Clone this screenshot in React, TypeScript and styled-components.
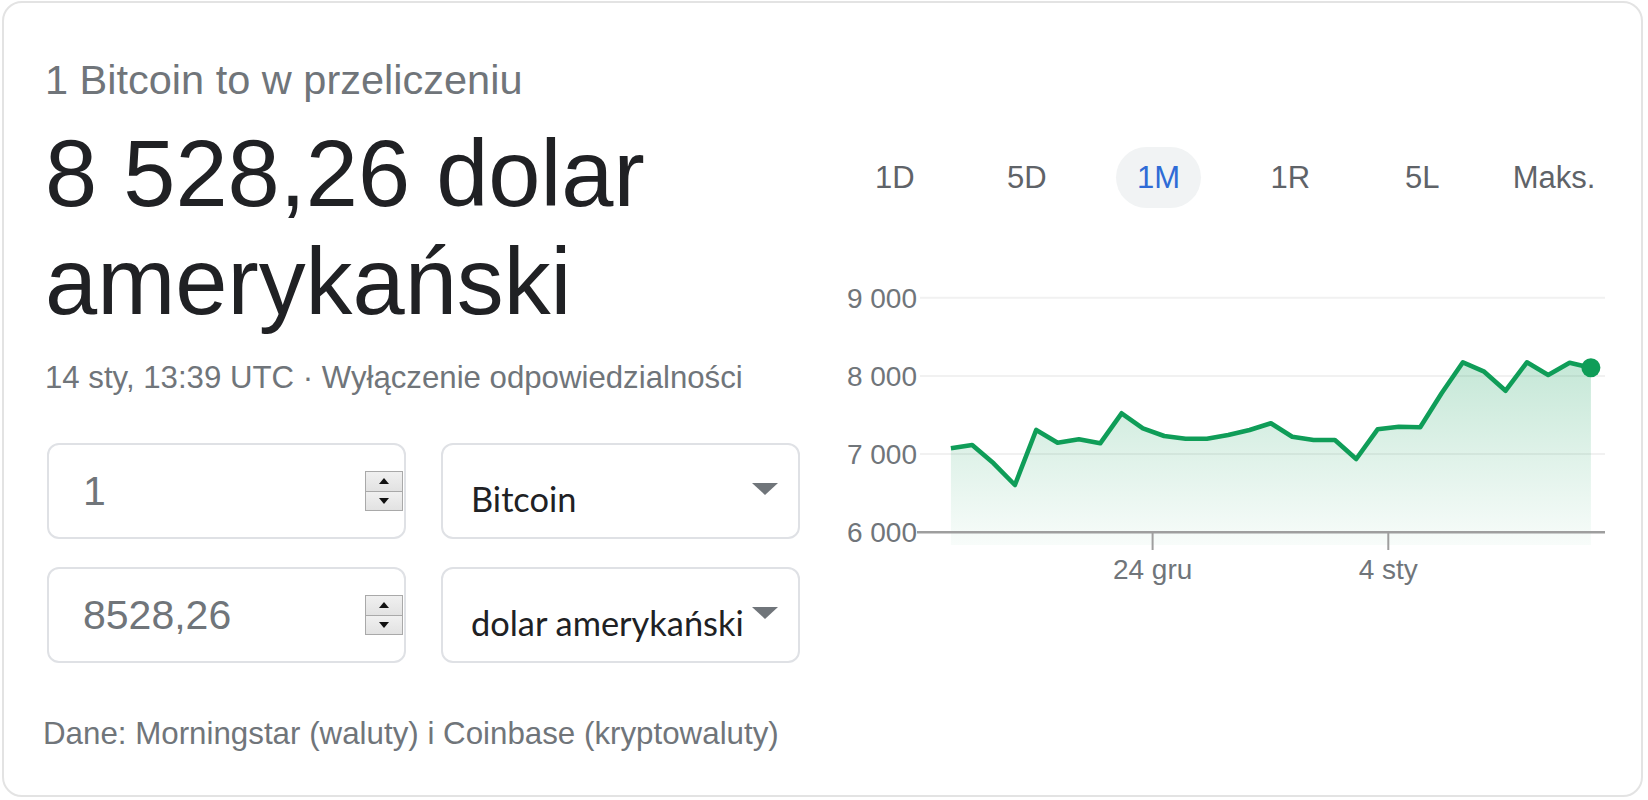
import React from 'react';
import styled, { createGlobalStyle } from 'styled-components';

const GlobalStyle = createGlobalStyle`
  html, body { margin: 0; padding: 0; background: #fff; }
  body { font-family: "Liberation Sans", Arial, sans-serif; }
`;

const Card = styled.div`
  box-sizing: border-box;
  width: 1641px;
  height: 796px;
  margin: 1px 0 0 2px;
  border: 2px solid #e3e3e3;
  border-radius: 20px;
  padding: 51px 0 0 41px;
  display: flex;
  align-items: flex-start;
  gap: 26px;
`;

const LeftColumn = styled.div`
  width: 758px;
  display: flex;
  flex-direction: column;
`;

const Title = styled.div`
  font-size: 41.5px;
  line-height: 52px;
  color: #70757a;
`;

const BigValue = styled.div`
  margin-top: 14px;
  font-size: 93.8px;
  line-height: 108px;
  color: #202124;
`;

const Meta = styled.div`
  margin-top: 22px;
  font-size: 31.2px;
  line-height: 40px;
  color: #70757a;
  white-space: nowrap;
`;

const Form = styled.div`
  margin: 45px 0 0 2px;
  display: grid;
  grid-template-columns: 359px 359px;
  grid-auto-rows: 96px;
  column-gap: 35px;
  row-gap: 28px;
`;

const Field = styled.div`
  box-sizing: border-box;
  border: 2px solid #dfe1e5;
  border-radius: 12px;
  display: flex;
  align-items: center;
  padding: 0 1px 0 34px;
`;

const NumberInput = styled.input`
  flex: 1;
  min-width: 0;
  border: none;
  outline: none;
  background: transparent;
  padding: 0;
  font-family: "Liberation Sans", Arial, sans-serif;
  font-size: 41px;
  color: #70757a;
`;

const Spinner = styled.div`
  width: 38px;
  height: 40px;
  box-sizing: border-box;
  border: 1px solid #a9a9a9;
  display: flex;
  flex-direction: column;
`;

const SpinButton = styled.div`
  flex: 1;
  background: linear-gradient(#f0f0f0, #e2e2e2);
  display: flex;
  align-items: center;
  justify-content: center;
  & + & { border-top: 1px solid #a9a9a9; }
`;

const SpinArrow = styled.span<{ $up?: boolean }>`
  width: 0;
  height: 0;
  border-left: 5px solid transparent;
  border-right: 5px solid transparent;
  ${(p) => (p.$up ? 'border-bottom: 6px solid #111;' : 'border-top: 6px solid #111;')}
`;

const SelectBox = styled.div`
  box-sizing: border-box;
  border: 2px solid #dfe1e5;
  border-radius: 12px;
  display: flex;
  align-items: center;
  padding: 14px 20px 0 28px;
  font-family: Lato, "Liberation Sans", sans-serif;
  font-size: 34.4px;
  color: #202124;
`;

const SelectText = styled.span`
  flex: 1;
  white-space: nowrap;
`;

const Caret = styled.svg`
  flex: none;
  align-self: flex-start;
  margin-top: 24px;
`;

const Footer = styled.div`
  margin-top: 51px;
  margin-left: -2px;
  font-size: 31.3px;
  line-height: 40px;
  color: #70757a;
  white-space: nowrap;
`;

const ChartColumn = styled.div`
  width: 791px;
  margin-top: 93px;
  display: flex;
  flex-direction: column;
`;

const Tabs = styled.div`
  display: grid;
  grid-template-columns: repeat(6, 1fr);
  height: 61px;
`;

const Tab = styled.div`
  display: flex;
  justify-content: center;
  align-items: center;
`;

const TabPill = styled.span<{ $active?: boolean }>`
  height: 61px;
  line-height: 62px;
  padding: 0 21px;
  border-radius: 31px;
  font-size: 31px;
  background: ${(p) => (p.$active ? '#f1f3f4' : 'transparent')};
  color: ${(p) => (p.$active ? '#2f6bd6' : '#5f6368')};
`;

const ChartSvg = styled.svg`
  margin-top: 72px;
  display: block;
`;

const values = [
  7074, 7116, 6882, 6605, 7308, 7146, 7189, 7138, 7522, 7330, 7231, 7197, 7197, 7244, 7308, 7394,
  7223, 7180, 7180, 6937, 7317, 7350, 7343, 7778, 8174, 8054, 7811, 8174, 8012, 8169, 8105,
];

const X0 = 121.9;
const DX = 21.333;
const BASE = 252.3;
const PER = 0.0782;
const yOf = (v: number) => BASE - (v - 6000) * PER;

function Chart() {
  const pts = values.map((v, i) => [X0 + i * DX, yOf(v)] as const);
  const line = pts.map(([x, y], i) => `${i ? 'L' : 'M'}${x.toFixed(1)} ${y.toFixed(1)}`).join(' ');
  const last = pts[pts.length - 1];
  const area = `${line} L${last[0].toFixed(1)} 265 L${X0} 265 Z`;
  const grid = [9000, 8000, 7000];
  const ticks = [
    { x: 323.6, label: '24 gru' },
    { x: 559.3, label: '4 sty' },
  ];
  return (
    <ChartSvg width="791" height="310" viewBox="0 0 791 310">
      <defs>
        <linearGradient id="fillg" x1="0" y1="0" x2="0" y2="1">
          <stop offset="0" stopColor="#0f9d58" stopOpacity="0.24" />
          <stop offset="1" stopColor="#0f9d58" stopOpacity="0.03" />
        </linearGradient>
      </defs>
      {grid.map((g) => (
        <line key={g} x1="91" x2="776" y1={yOf(g)} y2={yOf(g)} stroke="#f1f1f1" strokeWidth="2" />
      ))}
      <path d={area} fill="url(#fillg)" />
      <line x1="88" x2="776" y1={BASE} y2={BASE} stroke="#9e9e9e" strokeWidth="2.5" />
      {ticks.map((t) => (
        <line key={t.label} x1={t.x} x2={t.x} y1={BASE} y2={270} stroke="#9e9e9e" strokeWidth="2" />
      ))}
      <path d={line} fill="none" stroke="#0f9d58" strokeWidth="4.6" strokeLinejoin="round" />
      <circle cx={last[0]} cy={last[1]} r="9.5" fill="#0f9d58" />
      <g fontFamily='"Liberation Sans", Arial, sans-serif' fontSize="28" fill="#70757a">
        {[9000, 8000, 7000, 6000].map((g) => (
          <text key={g} x="88" y={yOf(g) + 10} textAnchor="end">
            {`${g / 1000} 000`}
          </text>
        ))}
        {ticks.map((t) => (
          <text key={t.label} x={t.x} y="299" textAnchor="middle">
            {t.label}
          </text>
        ))}
      </g>
    </ChartSvg>
  );
}

function NumberField({ value }: { value: string }) {
  return (
    <Field>
      <NumberInput readOnly value={value} />
      <Spinner>
        <SpinButton>
          <SpinArrow $up />
        </SpinButton>
        <SpinButton>
          <SpinArrow />
        </SpinButton>
      </Spinner>
    </Field>
  );
}

function Select({ label }: { label: string }) {
  return (
    <SelectBox>
      <SelectText>{label}</SelectText>
      <Caret width="26" height="12" viewBox="0 0 26 12">
        <polygon points="0,0 26,0 13,12" fill="#70757a" />
      </Caret>
    </SelectBox>
  );
}

const tabs = ['1D', '5D', '1M', '1R', '5L', 'Maks.'];

export default function App() {
  return (
    <>
      <GlobalStyle />
      <Card>
        <LeftColumn>
          <Title>1 Bitcoin to w przeliczeniu</Title>
          <BigValue>
            8 528,26 dolar
            <br />
            amerykański
          </BigValue>
          <Meta>14 sty, 13:39 UTC · Wyłączenie odpowiedzialności</Meta>
          <Form>
            <NumberField value="1" />
            <Select label="Bitcoin" />
            <NumberField value="8528,26" />
            <Select label="dolar amerykański" />
          </Form>
          <Footer>Dane: Morningstar (waluty) i Coinbase (kryptowaluty)</Footer>
        </LeftColumn>
        <ChartColumn>
          <Tabs>
            {tabs.map((t) => (
              <Tab key={t}>
                <TabPill $active={t === '1M'}>{t}</TabPill>
              </Tab>
            ))}
          </Tabs>
          <Chart />
        </ChartColumn>
      </Card>
    </>
  );
}
